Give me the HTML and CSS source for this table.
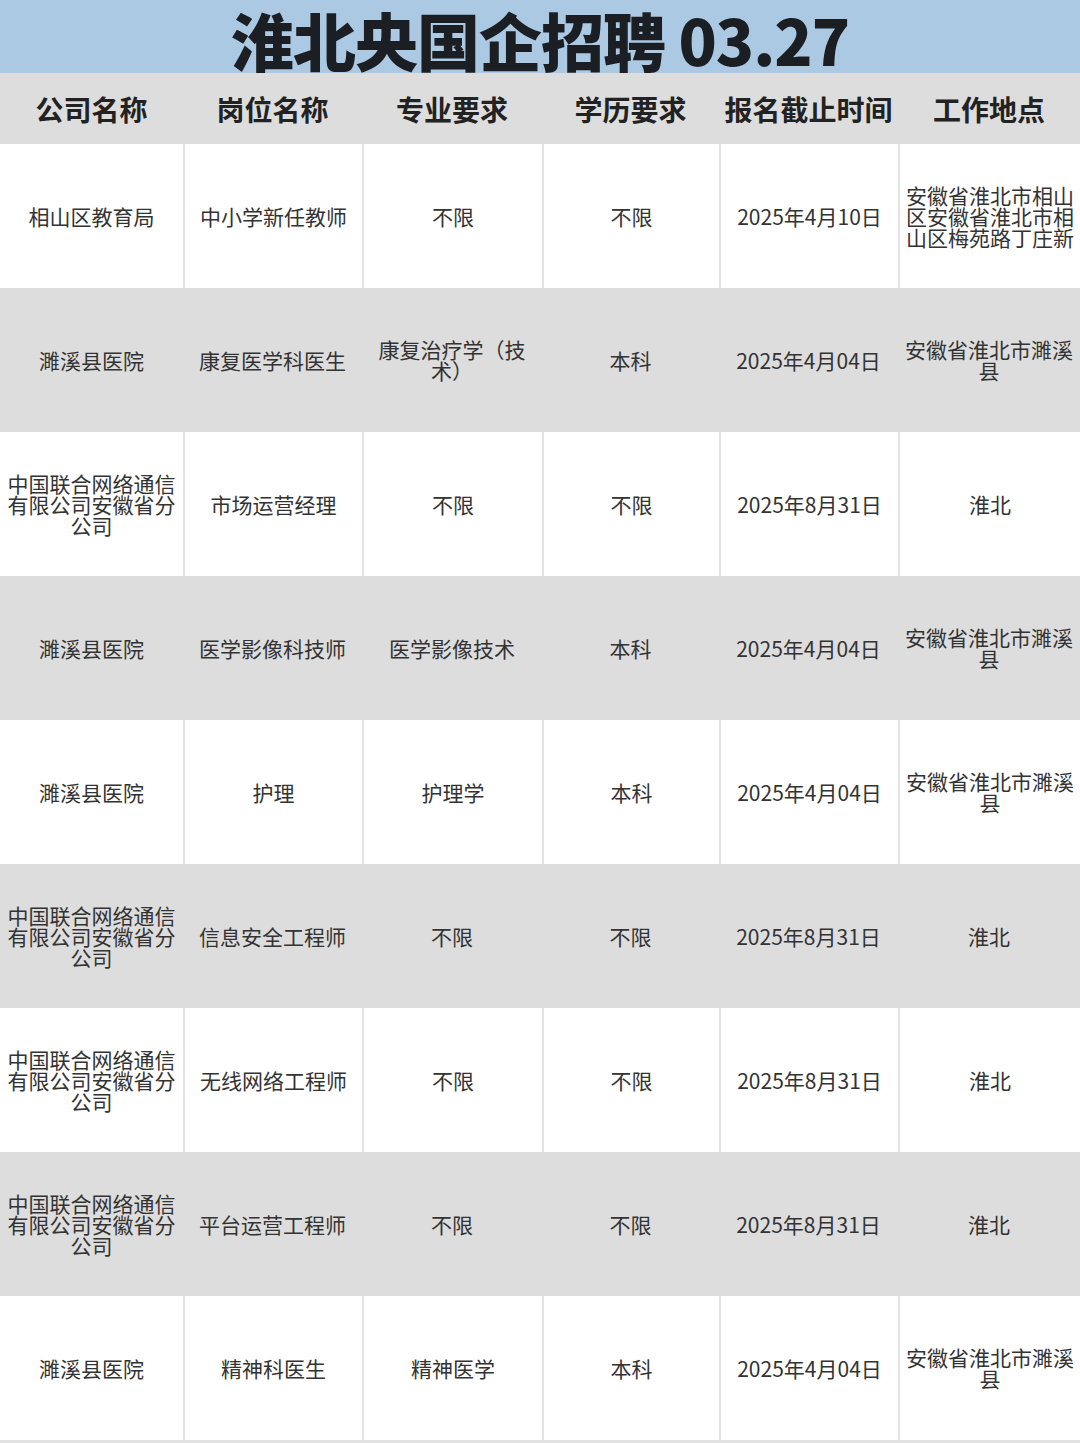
FILE: index.html
```html
<!DOCTYPE html>
<html lang="zh-CN">
<head>
<meta charset="utf-8">
<title>淮北央国企招聘 03.27</title>
<link rel="stylesheet" href="styles.css">
</head>
<body>
<div class="page">
  <div class="title">淮北央国企招聘 03.27</div>
  <div class="table">
    <div class="row head">
      <div class="cell">公司名称</div>
      <div class="cell">岗位名称</div>
      <div class="cell">专业要求</div>
      <div class="cell">学历要求</div>
      <div class="cell">报名截止时间</div>
      <div class="cell">工作地点</div>
    </div>
    <div class="row white">
      <div class="cell">相山区教育局</div>
      <div class="cell">中小学新任教师</div>
      <div class="cell">不限</div>
      <div class="cell">不限</div>
      <div class="cell">2025年4月10日</div>
      <div class="cell">安徽省淮北市相山区安徽省淮北市相山区梅苑路丁庄新</div>
    </div>
    <div class="row gray">
      <div class="cell">濉溪县医院</div>
      <div class="cell">康复医学科医生</div>
      <div class="cell">康复治疗学（技术）</div>
      <div class="cell">本科</div>
      <div class="cell">2025年4月04日</div>
      <div class="cell">安徽省淮北市濉溪县</div>
    </div>
    <div class="row white">
      <div class="cell">中国联合网络通信有限公司安徽省分公司</div>
      <div class="cell">市场运营经理</div>
      <div class="cell">不限</div>
      <div class="cell">不限</div>
      <div class="cell">2025年8月31日</div>
      <div class="cell">淮北</div>
    </div>
    <div class="row gray">
      <div class="cell">濉溪县医院</div>
      <div class="cell">医学影像科技师</div>
      <div class="cell">医学影像技术</div>
      <div class="cell">本科</div>
      <div class="cell">2025年4月04日</div>
      <div class="cell">安徽省淮北市濉溪县</div>
    </div>
    <div class="row white">
      <div class="cell">濉溪县医院</div>
      <div class="cell">护理</div>
      <div class="cell">护理学</div>
      <div class="cell">本科</div>
      <div class="cell">2025年4月04日</div>
      <div class="cell">安徽省淮北市濉溪县</div>
    </div>
    <div class="row gray">
      <div class="cell">中国联合网络通信有限公司安徽省分公司</div>
      <div class="cell">信息安全工程师</div>
      <div class="cell">不限</div>
      <div class="cell">不限</div>
      <div class="cell">2025年8月31日</div>
      <div class="cell">淮北</div>
    </div>
    <div class="row white">
      <div class="cell">中国联合网络通信有限公司安徽省分公司</div>
      <div class="cell">无线网络工程师</div>
      <div class="cell">不限</div>
      <div class="cell">不限</div>
      <div class="cell">2025年8月31日</div>
      <div class="cell">淮北</div>
    </div>
    <div class="row gray">
      <div class="cell">中国联合网络通信有限公司安徽省分公司</div>
      <div class="cell">平台运营工程师</div>
      <div class="cell">不限</div>
      <div class="cell">不限</div>
      <div class="cell">2025年8月31日</div>
      <div class="cell">淮北</div>
    </div>
    <div class="row white last">
      <div class="cell">濉溪县医院</div>
      <div class="cell">精神科医生</div>
      <div class="cell">精神医学</div>
      <div class="cell">本科</div>
      <div class="cell">2025年4月04日</div>
      <div class="cell">安徽省淮北市濉溪县</div>
    </div>
  </div>
</div>
</body>
</html>
```

FILE: styles.css
```css
html, body {
  margin: 0;
  padding: 0;
  background: #ffffff;
}
.page {
  width: 1080px;
  font-family: "Noto Sans CJK SC", "Noto Sans", sans-serif;
  color: #333333;
}
.title {
  height: 73px;
  background: #acc9e3;
  color: #1b1f24;
  font-size: 63px;
  font-weight: 900;
  line-height: 78px;
  text-align: center;
  overflow: hidden;
  letter-spacing: -1px;
  white-space: nowrap;
}
.table {
  display: flex;
  flex-direction: column;
  border-bottom: 3px solid #e2e2e2;
}
.row {
  display: grid;
  grid-template-columns: 183px 179px 180px 177px 179px 182px;
  height: 144px;
}
.row.head {
  height: 71px;
  background: #dddddd;
}
.row.head .cell {
  font-size: 28px;
  font-weight: 700;
  color: #222222;
  line-height: 34px;
  padding-top: 0;
  white-space: nowrap;
}
.row.gray {
  background: #dddddd;
}
.row.white {
  background: #ffffff;
}
.cell {
  display: flex;
  align-items: center;
  justify-content: center;
  text-align: center;
  font-size: 21px;
  line-height: 21px;
  padding: 0 4px;
  box-sizing: border-box;
  min-width: 0;
}
.row.white .cell + .cell {
  border-left: 2px solid #e3e3e3;
}
```
